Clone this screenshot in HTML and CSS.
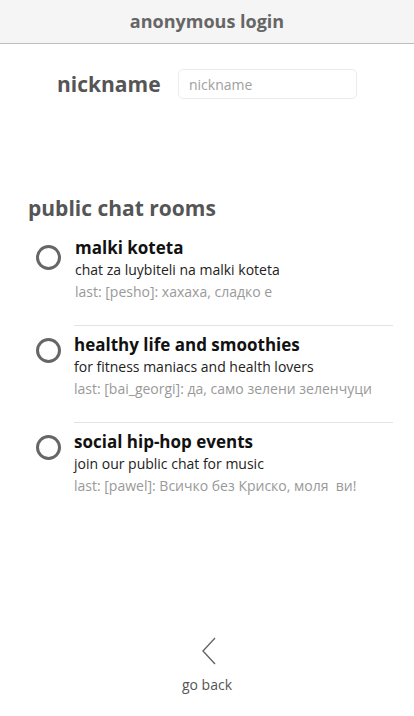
FILE: index.html
```html
<!DOCTYPE html>
<html>
<head>
<meta charset="utf-8">
<link rel="stylesheet" href="styles.css">
</head>
<body>
<div class="page">
  <header class="topbar">anonymous login</header>
  <div class="nick-row">
    <label class="nick-label" for="nick">nickname</label>
    <input id="nick" class="nick-input" type="text" placeholder="nickname">
  </div>
  <h2 class="section-title">public chat rooms</h2>
  <div class="rooms">
    <div class="room first">
      <span class="circle"></span>
      <div class="room-body">
        <div class="room-title">malki koteta</div>
        <div class="room-sub">chat za luybiteli na malki koteta</div>
        <div class="room-last">last: [pesho]: хахаха, сладко е</div>
      </div>
    </div>
    <div class="room">
      <span class="circle"></span>
      <div class="room-body">
        <div class="room-title">healthy life and smoothies</div>
        <div class="room-sub">for fitness maniacs and health lovers</div>
        <div class="room-last">last: [bai_georgi]: да, само зелени зеленчуци</div>
      </div>
    </div>
    <div class="room">
      <span class="circle"></span>
      <div class="room-body">
        <div class="room-title">social hip-hop events</div>
        <div class="room-sub">join our public chat for music</div>
        <div class="room-last">last: [pawel]: Всичко без Криско, моля&nbsp; ви!</div>
      </div>
    </div>
  </div>
  <footer class="footer">
    <svg class="chev" width="16" height="28" viewBox="0 0 16 28"><path d="M14 1 L2 14 L14 27" fill="none" stroke="#666" stroke-width="1.4"/></svg>
    <div class="back">go back</div>
  </footer>
</div>
</body>
</html>
```
FILE: styles.css
```css
* { box-sizing: border-box; }
html, body { margin: 0; padding: 0; }
body {
  font-family: "Open Sans", "Noto Sans", sans-serif;
  background: #fff;
  color: #222;
}
.page {
  min-height: 100vh;
  display: flex;
  flex-direction: column;
}
.topbar {
  height: 44px;
  background: #f5f5f5;
  border-bottom: 1px solid #bdbdbd;
  color: #666;
  font-weight: 700;
  font-size: 18px;
  line-height: 43px;
  text-align: center;
}
.nick-row {
  display: flex;
  align-items: center;
  margin-top: 25px;
  padding-left: 57px;
  height: 30px;
}
.nick-label {
  font-weight: 700;
  font-size: 21px;
  color: #555;
  width: 121px;
}
.nick-input {
  width: 179px;
  height: 30px;
  border: 1px solid #ececec;
  border-radius: 5px;
  padding: 0 10px;
  font-family: inherit;
  font-size: 14px;
  color: #333;
  outline: none;
}
.nick-input::placeholder { color: #a0a0a0; }
.section-title {
  margin: 95px 0 0 28px;
  font-size: 21px;
  line-height: 28px;
  font-weight: 700;
  color: #555;
}
.rooms {
  margin-top: 15px;
}
.room {
  display: flex;
  align-items: flex-start;
  padding-left: 36px;
}
.circle {
  flex: none;
  width: 25px;
  height: 25px;
  border: 3.5px solid #666;
  border-radius: 50%;
  margin-top: 13px;
}
.room.first .circle { margin-top: 8px; }
.room-body {
  flex: 1;
  margin-left: 13px;
  margin-right: 21px;
  padding: 8px 0 23px 0;
  border-top: 1px solid #e3e3e3;
}
.room.first .room-body {
  border-top: none;
  padding-top: 0;
  padding-left: 1px;
}
.room-title {
  font-weight: 700;
  font-size: 17px;
  line-height: 22px;
  color: #111;
}
.room-sub {
  font-size: 14px;
  line-height: 22px;
  color: #222;
}
.room-last {
  font-size: 14px;
  line-height: 21px;
  color: #999;
  white-space: nowrap;
}
.footer {
  margin-top: auto;
  display: flex;
  flex-direction: column;
  align-items: center;
  padding-bottom: 21px;
}
.chev {
  display: block;
  margin-left: 3px;
}
.back {
  margin-top: 10px;
  font-size: 14px;
  line-height: 20px;
  color: #555;
}
```
